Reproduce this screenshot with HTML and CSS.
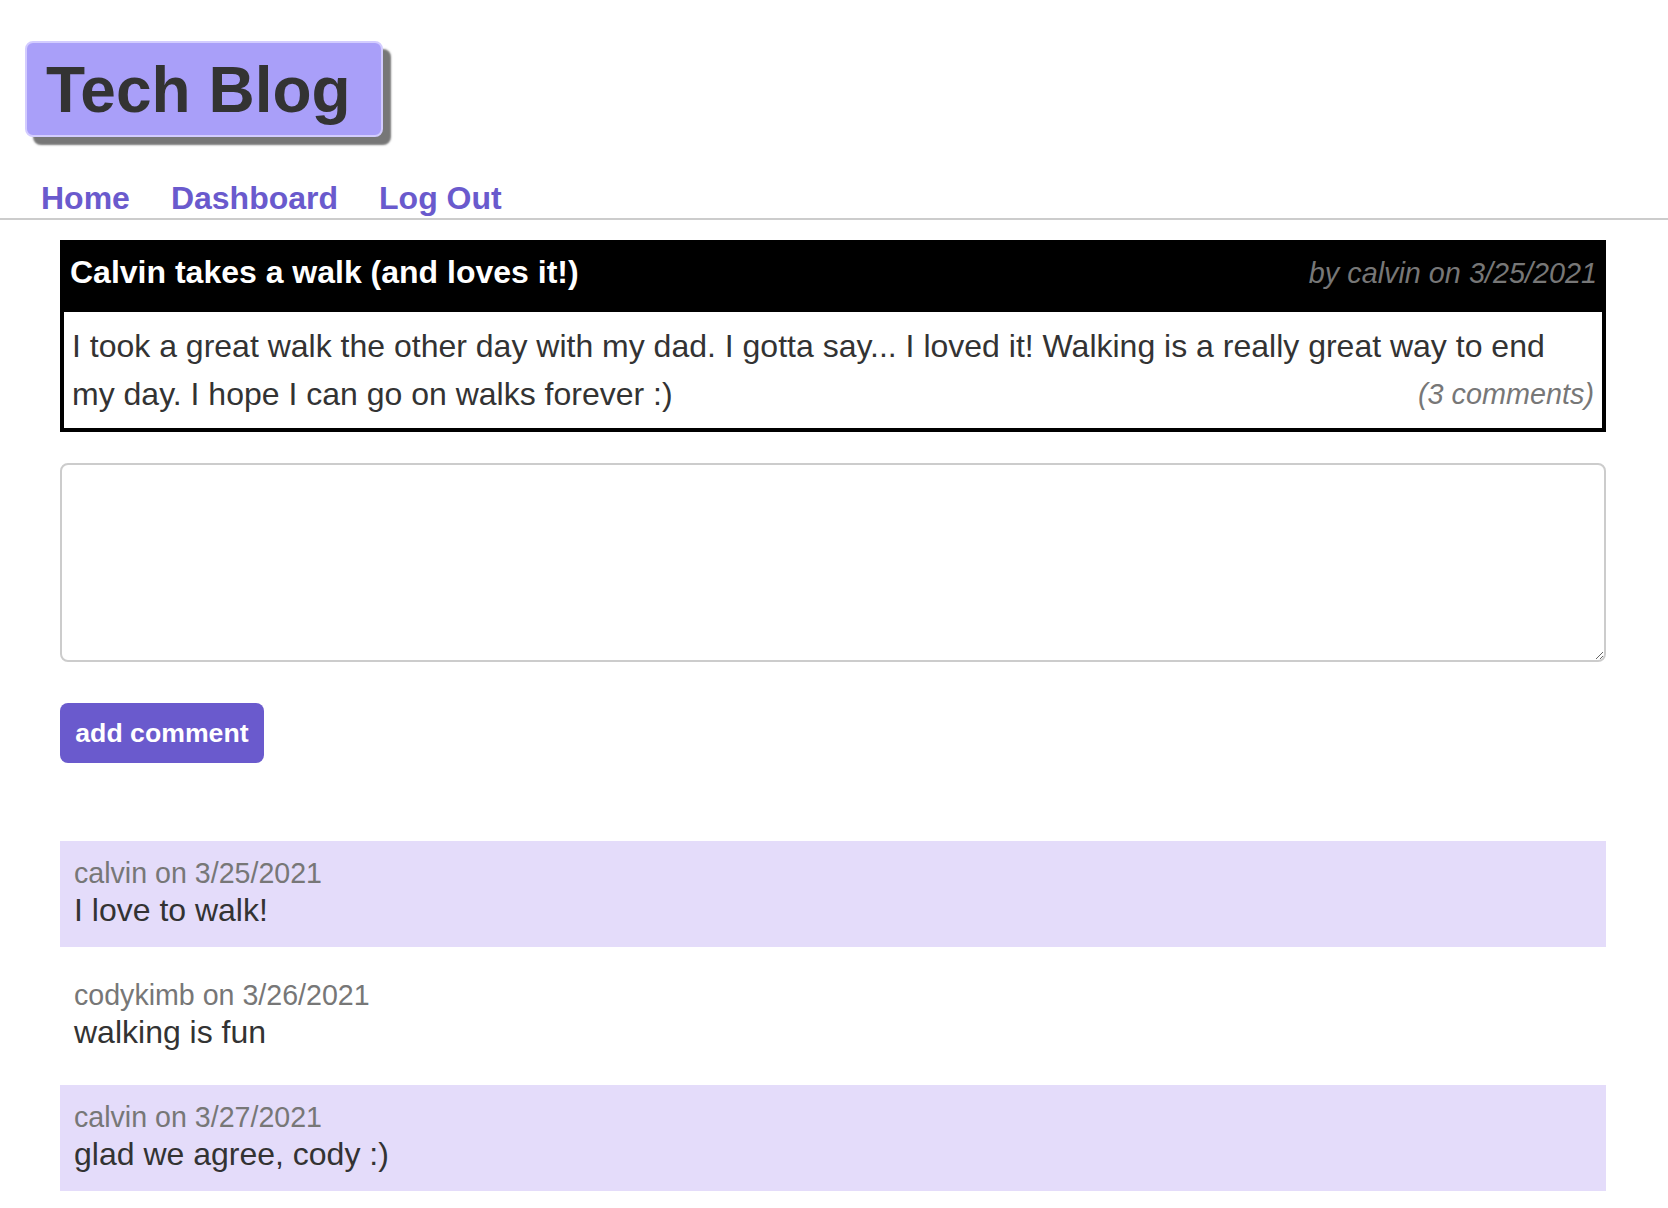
FILE: index.html
```html
<!DOCTYPE html>
<html lang="en">
<head>
<meta charset="utf-8">
<title>Tech Blog</title>
<link rel="stylesheet" href="styles.css">
</head>
<body>
<header class="site-header">
  <h1 class="logo">Tech Blog</h1>
  <nav class="nav">
    <a class="nav-link" href="#">Home</a>
    <a class="nav-link" href="#">Dashboard</a>
    <a class="nav-link" href="#">Log Out</a>
  </nav>
</header>
<main class="main">
  <article class="post">
    <div class="post-head">
      <h2 class="post-title">Calvin takes a walk (and loves it!)</h2>
      <span class="post-meta">by calvin on 3/25/2021</span>
    </div>
    <p class="post-body">I took a great walk the other day with my dad. I gotta say... I loved it! Walking is a really great way to end my day. I hope I can go on walks forever :) <span class="post-count">(3 comments)</span></p>
  </article>
  <form class="comment-form">
    <textarea class="comment-input" name="comment"></textarea>
    <button class="btn" type="button">add comment</button>
  </form>
  <section class="comments">
    <div class="comment">
      <div class="comment-meta">calvin on 3/25/2021</div>
      <div class="comment-text">I love to walk!</div>
    </div>
    <div class="comment">
      <div class="comment-meta">codykimb on 3/26/2021</div>
      <div class="comment-text">walking is fun</div>
    </div>
    <div class="comment">
      <div class="comment-meta">calvin on 3/27/2021</div>
      <div class="comment-text">glad we agree, cody :)</div>
    </div>
  </section>
</main>
</body>
</html>
```
FILE: styles.css
```css
* {
  box-sizing: border-box;
}

body {
  margin: 0;
  font-family: "Liberation Sans", Arial, Helvetica, sans-serif;
  color: #333;
  background: #fff;
}

.site-header {
  display: flex;
  flex-direction: column;
  align-items: flex-start;
  padding-top: 41px;
}

.logo {
  margin: 0 0 0 25px;
  font-size: 64px;
  line-height: 64px;
  font-weight: bold;
  color: #333;
  background: #a99ff9;
  border: 2px solid #d3ccff;
  border-radius: 8px;
  padding: 15px 30px 13px 19px;
  box-shadow: 8px 8px 2px #777;
}

.nav {
  align-self: stretch;
  display: flex;
  gap: 41px;
  margin-top: 43px;
  padding: 0 0 1px 41px;
  border-bottom: 2px solid #ccc;
}

.nav-link {
  font-size: 32px;
  font-weight: bold;
  color: #6a5acd;
  text-decoration: none;
}

.main {
  padding: 20px 62px 0 60px;
}

.post {
  border: 4px solid #000;
}

.post-head {
  display: flex;
  justify-content: space-between;
  align-items: baseline;
  background: #000;
  padding: 10px 5px 21px 6px;
}

.post-title {
  margin: 0;
  font-size: 32px;
  font-weight: bold;
  color: #fff;
}

.post-meta {
  font-size: 28.8px;
  font-style: italic;
  color: #777;
}

.post-body {
  margin: 0;
  padding: 10px 8px;
  font-size: 32px;
  line-height: 48px;
  color: #333;
}

.post-count {
  float: right;
  font-size: 28.8px;
  font-style: italic;
  color: #777;
}

.comment-form {
  margin-top: 31px;
}

.comment-input {
  display: block;
  width: 100%;
  height: 199px;
  border: 2px solid #ccc;
  border-radius: 8px;
  font-family: inherit;
  font-size: 28px;
  padding: 8px;
}

.btn {
  display: block;
  margin-top: 41px;
  font-family: "Liberation Sans", Arial, Helvetica, sans-serif;
  font-size: 26.67px;
  font-weight: bold;
  color: #fff;
  background: #6a5acd;
  border: none;
  border-radius: 8px;
  padding: 14.7px 15.3px;
}

.comments {
  margin-top: 78px;
  display: flex;
  flex-direction: column;
  gap: 16px;
}

.comment {
  padding: 16px 14px 18px;
}

.comment:nth-child(odd) {
  background: #e4dcfa;
}

.comment-meta {
  font-size: 28.6px;
  line-height: 32px;
  color: #777;
}

.comment-text {
  margin-top: 2px;
  font-size: 32px;
  line-height: 38px;
  color: #333;
}
```
